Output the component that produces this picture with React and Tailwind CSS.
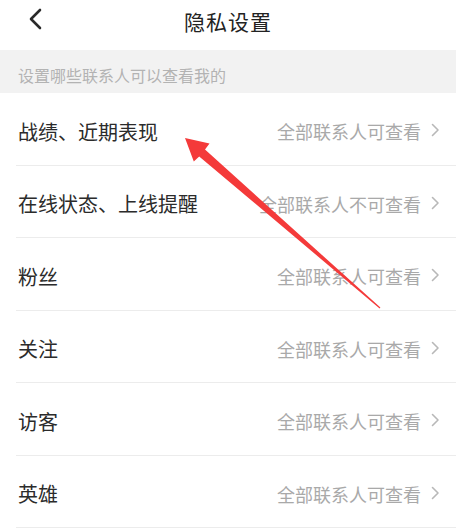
import React from "react";

const rows = [
  ["战绩、近期表现", "全部联系人可查看"],
  ["在线状态、上线提醒", "全部联系人不可查看"],
  ["粉丝", "全部联系人可查看"],
  ["关注", "全部联系人可查看"],
  ["访客", "全部联系人可查看"],
  ["英雄", "全部联系人可查看"],
];

function Chevron() {
  return (
    <svg width="9" height="14" viewBox="0 0 9 14" className="ml-[10px] shrink-0 -mt-[3px]">
      <path d="M1.5 1.5 L7 7 L1.5 12.5" fill="none" stroke="#b8b8b8" strokeWidth="1.6" strokeLinecap="round" strokeLinejoin="round" />
    </svg>
  );
}

export default function App() {
  return (
    <div
      className="relative w-[456px] h-[528px] overflow-hidden bg-white"
      style={{ fontFamily: '"Noto Sans CJK SC", "Noto Sans", sans-serif' }}
    >
      <div className="relative h-[50px] flex items-center justify-center">
        <svg width="16" height="22" viewBox="0 0 16 22" className="absolute left-[27px] top-[8px]">
          <path d="M13 2 L4 11 L13 20" fill="none" stroke="#2a2a2a" strokeWidth="2.6" strokeLinecap="round" strokeLinejoin="round" />
        </svg>
        <span className="text-[21px] text-[#222] tracking-[1px] -mt-[6px]">隐私设置</span>
      </div>
      <div className="h-[43px] bg-[#f2f2f2] flex items-center pl-[18px] pt-[6px]">
        <span className="text-[16px] text-[#b3b3b3]">设置哪些联系人可以查看我的</span>
      </div>
      <div>
        {rows.map(([l, r], i) => (
          <div key={i} className="h-[72.5px] ml-[16px] pr-[16px] pt-[6px] border-b border-[#ececec] flex items-center">
            <span className="ml-[2px] text-[20px] text-[#2b2b2b] flex-1">{l}</span>
            <span className="text-[18px] text-[#a9a9a9]">{r}</span>
            <Chevron />
          </div>
        ))}
      </div>
      <svg className="absolute left-0 top-0 pointer-events-none" width="456" height="528" viewBox="0 0 456 528">
        <polygon
          points="185,138 209.5,143.5 205,149.6 380.4,307.6 379.6,308.4 199.2,156.4 193.8,161.5"
          fill="#f43a3a"
        />
      </svg>
    </div>
  );
}
